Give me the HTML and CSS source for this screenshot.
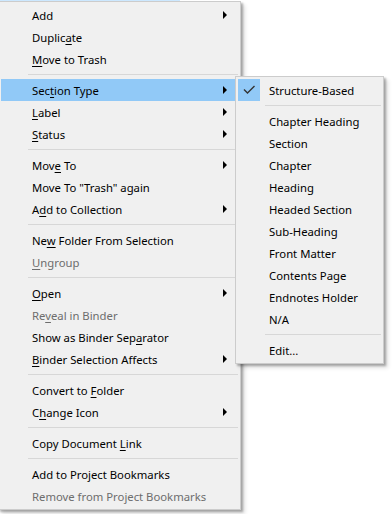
FILE: index.html
```html
<!DOCTYPE html>
<html>
<head>
<meta charset="utf-8">
<link rel="stylesheet" href="styles.css">
</head>
<body>
<div class="backdrop"><div class="selrow"></div></div>

<div class="menu main">
  <div class="item"><span class="label">Add</span><span class="arrow"></span></div>
  <div class="item"><span class="label">Duplic<u>a</u>te</span></div>
  <div class="item"><span class="label"><u>M</u>ove to Trash</span></div>
  <div class="sep"></div>
  <div class="item active"><span class="label">Sec<u>t</u>ion Type</span><span class="arrow"></span></div>
  <div class="item"><span class="label"><u>L</u>abel</span><span class="arrow"></span></div>
  <div class="item"><span class="label"><u>S</u>tatus</span><span class="arrow"></span></div>
  <div class="sep"></div>
  <div class="item"><span class="label">Mov<u>e</u> To</span><span class="arrow"></span></div>
  <div class="item"><span class="label">Move To "Trash" again</span></div>
  <div class="item"><span class="label">A<u>d</u>d to Collection</span><span class="arrow"></span></div>
  <div class="sep"></div>
  <div class="item"><span class="label">Ne<u>w</u> Folder From Selection</span></div>
  <div class="item disabled"><span class="label"><u>U</u>ngroup</span></div>
  <div class="sep"></div>
  <div class="item"><span class="label"><u>O</u>pen</span><span class="arrow"></span></div>
  <div class="item disabled"><span class="label">Re<u>v</u>eal in Binder</span></div>
  <div class="item"><span class="label">Show as Binder Sep<u>a</u>rator</span></div>
  <div class="item"><span class="label"><u>B</u>inder Selection Affects</span><span class="arrow"></span></div>
  <div class="sep"></div>
  <div class="item"><span class="label">Convert to <u>F</u>older</span></div>
  <div class="item"><span class="label">C<u>h</u>ange Icon</span><span class="arrow"></span></div>
  <div class="sep"></div>
  <div class="item"><span class="label">Copy Document <u>L</u>ink</span></div>
  <div class="sep"></div>
  <div class="item"><span class="label">Add to Project Bookmarks</span></div>
  <div class="item disabled"><span class="label">Remove from Project Bookmarks</span></div>
</div>

<div class="menu sub">
  <div class="item checked">
    <span class="check"><svg width="22" height="22" viewBox="0 0 22 22"><polyline points="6,10.5 9.5,14 16.5,7" fill="none" stroke="#333" stroke-width="1.4"/></svg></span>
    <span class="label">Structure-Based</span>
  </div>
  <div class="sep"></div>
  <div class="item"><span class="label">Chapter Heading</span></div>
  <div class="item"><span class="label">Section</span></div>
  <div class="item"><span class="label">Chapter</span></div>
  <div class="item"><span class="label">Heading</span></div>
  <div class="item"><span class="label">Headed Section</span></div>
  <div class="item"><span class="label">Sub-Heading</span></div>
  <div class="item"><span class="label">Front Matter</span></div>
  <div class="item"><span class="label">Contents Page</span></div>
  <div class="item"><span class="label">Endnotes Holder</span></div>
  <div class="item"><span class="label">N/A</span></div>
  <div class="sep"></div>
  <div class="item"><span class="label">Edit...</span></div>
</div>
</body>
</html>
```

FILE: styles.css
```css
html, body {
  margin: 0;
  padding: 0;
  background: #ffffff;
  width: 392px;
  height: 514px;
  overflow: hidden;
  font-family: "Noto Sans", "Segoe UI", sans-serif;
  font-size: 11.3px;
  color: #000;
}

.backdrop {
  height: 514px;
}

.selrow {
  height: 2px;
  width: 180px;
  background: #cce8ff;
}

.menu {
  position: absolute;
  box-sizing: border-box;
  background: #f0f0f0;
  border: 1px solid #cccccc;
  padding: 2px;
  box-shadow: 2px 2px 2px rgba(0, 0, 0, 0.28), 4px 4px 4px rgba(0, 0, 0, 0.12);
}

.main {
  left: -2px;
  top: 1px;
  width: 243px;
}

.sub {
  left: 235px;
  top: 76px;
  width: 149px;
}

.item {
  display: flex;
  align-items: center;
  height: 22px;
  padding-left: 31px;
  white-space: nowrap;
}

.item .label {
  line-height: 22px;
  padding-top: 1px;
}

.item u {
  text-decoration: underline;
  text-underline-offset: 2px;
  text-decoration-thickness: 1px;
}

.item.active {
  background: #91c9f7;
}

.item.disabled {
  color: #6d6d6d;
}

.arrow {
  margin-left: auto;
  margin-right: 11px;
  width: 0;
  height: 0;
  border-left: 4px solid #000;
  border-top: 4px solid transparent;
  border-bottom: 4px solid transparent;
}

.item.checked {
  padding-left: 0;
}

.check {
  display: flex;
  width: 22px;
  height: 22px;
  background: #91c9f7;
  margin-right: 9px;
}

.sep {
  height: 9px;
  box-sizing: border-box;
  padding-top: 4px;
  margin-left: 27px;
}

.sep::before {
  content: "";
  display: block;
  height: 1px;
  background: #d7d7d7;
}
```
